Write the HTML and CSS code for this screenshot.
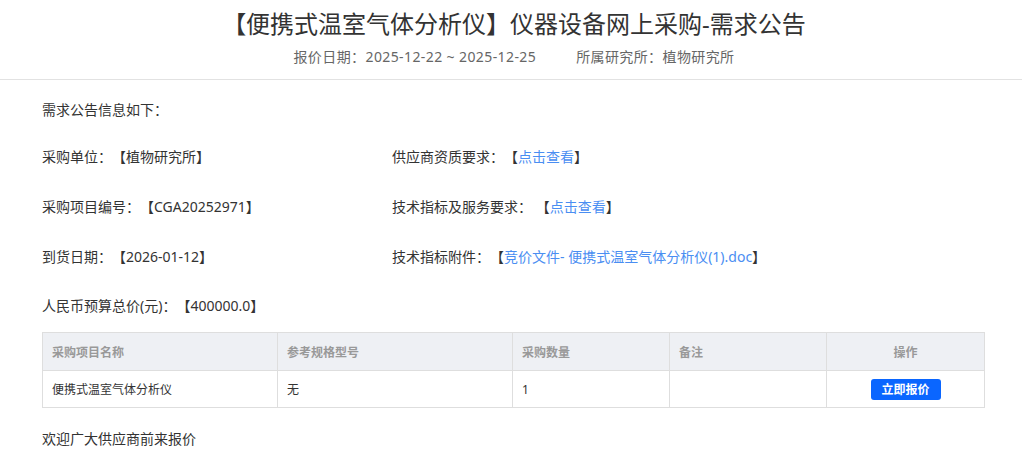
FILE: index.html
```html
<!DOCTYPE html>
<html lang="zh-CN">
<head>
<meta charset="utf-8">
<title>需求公告</title>
<link rel="stylesheet" href="styles.css">
</head>
<body>
<header class="hd">
  <h1 class="hd-title">【便携式温室气体分析仪】仪器设备网上采购-需求公告</h1>
  <div class="hd-meta">
    <span>报价日期：2025-12-22 ~ 2025-12-25</span>
    <span>所属研究所：植物研究所</span>
  </div>
</header>
<main class="content">
  <p class="intro">需求公告信息如下：</p>
  <div class="grid">
    <div class="item">采购单位：【植物研究所】</div>
    <div class="item">供应商资质要求：【<a class="lnk" href="#">点击查看</a>】</div>
    <div class="item">采购项目编号：【CGA20252971】</div>
    <div class="item">技术指标及服务要求：&nbsp;【<a class="lnk" href="#">点击查看</a>】</div>
    <div class="item">到货日期：【2026-01-12】</div>
    <div class="item">技术指标附件：【<a class="lnk" href="#">竞价文件- 便携式温室气体分析仪(1).doc</a>】</div>
  </div>
  <p class="budget">人民币预算总价(元)：【400000.0】</p>
  <table class="tbl">
    <colgroup>
      <col class="c1"><col class="c2"><col class="c3"><col class="c4"><col class="c5">
    </colgroup>
    <thead>
      <tr><th>采购项目名称</th><th>参考规格型号</th><th>采购数量</th><th>备注</th><th class="center">操作</th></tr>
    </thead>
    <tbody>
      <tr><td>便携式温室气体分析仪</td><td>无</td><td>1</td><td></td><td class="center"><button class="btn">立即报价</button></td></tr>
    </tbody>
  </table>
  <p class="welcome">欢迎广大供应商前来报价</p>
</main>
</body>
</html>
```

FILE: styles.css
```css
* { box-sizing: border-box; }
html, body { margin: 0; padding: 0; background: #fff; }
body {
  font-family: "Noto Sans", "Noto Sans CJK SC", sans-serif;
  color: #333;
  font-size: 14px;
  text-spacing-trim: space-all;
}
.hd {
  text-align: center;
  padding: 9px 0 12px 6px;
  border-bottom: 1px solid #e2e2e2;
}
.hd-title {
  margin: 0;
  font-size: 24px;
  line-height: 30px;
  font-weight: 400;
  color: #333;
}
.hd-meta {
  margin-top: 8px;
  font-size: 14px;
  line-height: 20px;
  color: #666;
  letter-spacing: 0.4px;
  display: flex;
  justify-content: center;
  gap: 40px;
}
.content {
  padding: 20px 38px 0 42px;
}
.intro {
  margin: 0 0 27px;
  line-height: 20px;
}
.grid {
  display: grid;
  grid-template-columns: 350px 1fr;
  row-gap: 30px;
  line-height: 20px;
}
.lnk { color: #4a8ef2; text-decoration: none; }
.budget {
  margin: 29px 0 16px;
  line-height: 20px;
}
.tbl {
  width: 942px;
  border-collapse: collapse;
  table-layout: fixed;
  font-size: 12px;
}
.c1, .c2 { width: 235px; }
.c3, .c4 { width: 157px; }
.c5 { width: 158px; }
.tbl th, .tbl td {
  border: 1px solid #dedede;
  padding: 0 9px;
  text-align: left;
}
.tbl th {
  height: 38px;
  background: #eef0f4;
  color: #999;
  font-weight: 700;
}
.tbl td {
  height: 37px;
  color: #333;
}
.tbl .center { text-align: center; }
.btn {
  border: 0;
  background: #0a66ff;
  color: #fff;
  font-family: inherit;
  font-size: 12px;
  font-weight: 700;
  width: 70px;
  height: 21px;
  line-height: 21px;
  padding: 0;
  border-radius: 3px;
  cursor: pointer;
}
.welcome {
  margin: 21px 0 0;
  line-height: 20px;
}
```
